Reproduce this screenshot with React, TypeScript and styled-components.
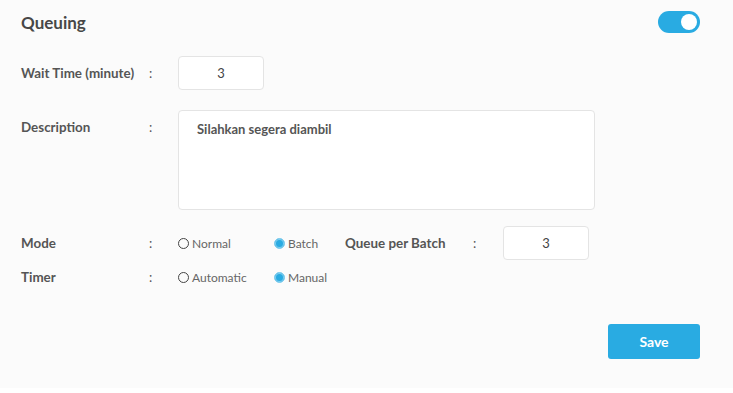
import styled, { createGlobalStyle } from "styled-components";

const GlobalStyle = createGlobalStyle`
  body {
    margin: 0;
    background: #ffffff;
    font-family: "Lato", "Noto Sans", sans-serif;
  }
  * {
    box-sizing: border-box;
  }
`;

const Panel = styled.div`
  background: #fbfbfb;
  height: 388px;
  padding: 11px 33px 0 21px;
`;

const Header = styled.header`
  display: flex;
  justify-content: space-between;
  align-items: center;
  height: 22px;
  margin-bottom: 23px;
`;

const Title = styled.h1`
  margin: 0;
  font-size: 17px;
  font-weight: 700;
  color: #474747;
`;

const Toggle = styled.div<{ on: boolean }>`
  width: 42px;
  height: 22px;
  border-radius: 11px;
  background: ${(p) => (p.on ? "#29abe2" : "#cccccc")};
  display: flex;
  align-items: center;
  justify-content: ${(p) => (p.on ? "flex-end" : "flex-start")};
  padding: 0 3px;
`;

const Knob = styled.span`
  width: 16px;
  height: 16px;
  border-radius: 50%;
  background: #ffffff;
`;

const Row = styled.div<{ top?: boolean; gapAfter: number }>`
  display: grid;
  grid-template-columns: 128px 29px auto;
  align-items: ${(p) => (p.top ? "start" : "center")};
  margin-bottom: ${(p) => p.gapAfter}px;
`;

const Label = styled.span<{ top?: boolean }>`
  font-size: 13.4px;
  font-weight: 700;
  color: #555555;
  padding-top: ${(p) => (p.top ? "9px" : "0")};
`;

const Colon = styled.span<{ top?: boolean }>`
  font-size: 13px;
  color: #555555;
  padding-top: ${(p) => (p.top ? "9px" : "0")};
`;

const NumberBox = styled.div`
  width: 86px;
  height: 34px;
  background: #ffffff;
  border: 1px solid #e4e4e4;
  border-radius: 4px;
  display: flex;
  align-items: center;
  justify-content: center;
  font-size: 13px;
  color: #444444;
`;

const TextArea = styled.div`
  width: 417px;
  height: 100px;
  background: #ffffff;
  border: 1px solid #e4e4e4;
  border-radius: 4px;
  padding: 10px 18px;
  font-size: 13px;
  font-weight: 700;
  color: #555555;
`;

const Options = styled.div`
  display: flex;
  align-items: center;
  min-height: 34px;
`;

const Option = styled.label`
  width: 96px;
  display: flex;
  align-items: center;
  gap: 3px;
  font-size: 12px;
  color: #666666;
`;

const Dot = styled.span<{ checked: boolean }>`
  width: 11px;
  height: 11px;
  border-radius: 50%;
  border: ${(p) => (p.checked ? "1.5px solid #7fcdee" : "1.5px solid #444444")};
  background: ${(p) => (p.checked ? "#29abe2" : "transparent")};
  box-shadow: ${(p) => (p.checked ? "inset 0 0 0 1px #7fcdee" : "none")};
`;

const SideField = styled.div`
  display: grid;
  grid-template-columns: 128px 30px auto;
  align-items: center;
  margin-left: -25px;
`;

const Footer = styled.div`
  display: flex;
  justify-content: flex-end;
  margin-top: 30px;
`;

const SaveButton = styled.button`
  width: 92px;
  height: 35px;
  border: none;
  border-radius: 3px;
  background: #29abe2;
  color: #ffffff;
  font-family: inherit;
  font-size: 14px;
  font-weight: 700;
`;

function Radio({ label, checked }: { label: string; checked?: boolean }) {
  return (
    <Option>
      <Dot checked={!!checked} />
      {label}
    </Option>
  );
}

export default function App() {
  return (
    <>
      <GlobalStyle />
      <Panel>
        <Header>
          <Title>Queuing</Title>
          <Toggle on={true}>
            <Knob />
          </Toggle>
        </Header>
        <Row gapAfter={20}>
          <Label>Wait Time (minute)</Label>
          <Colon>:</Colon>
          <NumberBox>3</NumberBox>
        </Row>
        <Row top gapAfter={16}>
          <Label top>Description</Label>
          <Colon top>:</Colon>
          <TextArea>Silahkan segera diambil</TextArea>
        </Row>
        <Row gapAfter={0}>
          <Label>Mode</Label>
          <Colon>:</Colon>
          <Options>
            <Radio label="Normal" />
            <Radio label="Batch" checked />
            <SideField>
              <Label>Queue per Batch</Label>
              <Colon>:</Colon>
              <NumberBox>3</NumberBox>
            </SideField>
          </Options>
        </Row>
        <Row gapAfter={0}>
          <Label>Timer</Label>
          <Colon>:</Colon>
          <Options>
            <Radio label="Automatic" />
            <Radio label="Manual" checked />
          </Options>
        </Row>
        <Footer>
          <SaveButton>Save</SaveButton>
        </Footer>
      </Panel>
    </>
  );
}
